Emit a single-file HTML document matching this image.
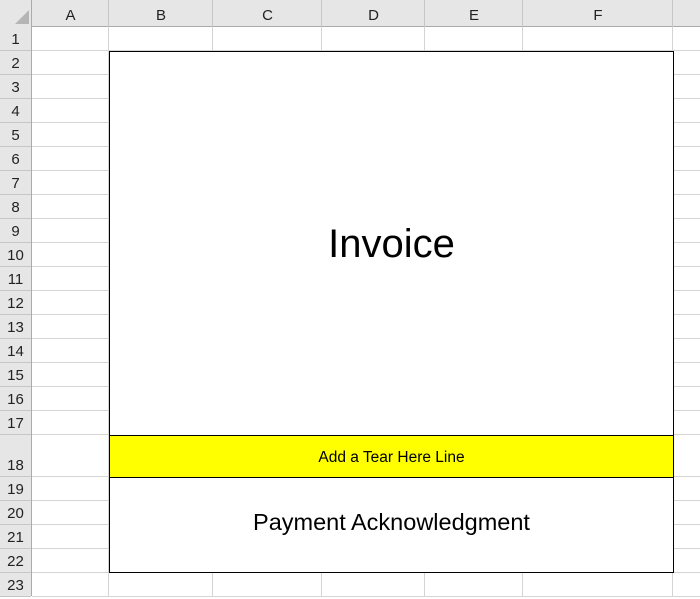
<!DOCTYPE html><html><head><style>
body{margin:0;width:700px;height:596px;overflow:hidden;background:#fff;font-family:"Liberation Sans",Calibri,sans-serif;position:relative}
.a{position:absolute}
.hl{position:absolute;height:1px;background:#d4d4d4}
.vl{position:absolute;width:1px;background:#d4d4d4}
.ch{position:absolute;top:0;height:27px;line-height:31px;text-align:center;font-size:15px;color:#222}
.rh{position:absolute;left:0;width:31px;text-align:center;font-size:15px;color:#222}
</style></head><body>
<div class="a" style="left:0;top:0;width:700px;height:27px;background:#e6e6e6;border-bottom:1px solid #ababab;box-sizing:border-box"></div>
<div class="a" style="left:0;top:0;width:32px;height:596px;background:#e6e6e6;border-right:1px solid #ababab;box-sizing:border-box"></div>
<svg class="a" style="left:14px;top:10px" width="16" height="15"><polygon points="15,0 15,14 1,14" fill="#b5b5b5"/></svg>
<div id="g"></div>
<div class="a" style="left:109px;top:51px;width:565px;height:522px;border:1px solid #000;box-sizing:border-box;background:#fff"></div>
<div class="a" style="left:109px;top:435px;width:565px;height:43px;border:1px solid #000;box-sizing:border-box;background:#ffff00;text-align:center;line-height:40px;font-size:15.5px;padding-top:2px">Add a Tear Here Line</div>
<div class="a" style="left:109px;top:222px;width:565px;text-align:center;font-size:40px">Invoice</div>
<div class="a" style="left:109px;top:509px;width:565px;text-align:center;font-size:23.5px">Payment Acknowledgment</div>
<script>
var cols=[[32,109,'A'],[109,213,'B'],[213,322,'C'],[322,425,'D'],[425,523,'E'],[523,673,'F'],[673,760,'']];
var h='';
cols.forEach(function(c){h+='<div class="ch" style="left:'+c[0]+'px;width:'+(c[1]-c[0])+'px">'+c[2]+'</div>';
h+='<div class="vl" style="left:'+(c[1]-1)+'px;top:0;height:27px;background:#c6c6c6"></div>';
h+='<div class="vl" style="left:'+(c[1]-1)+'px;top:27px;height:570px"></div>';});
var ys=[27];for(var i=1;i<=17;i++)ys.push(27+24*i);ys.push(477);for(var i=1;i<=5;i++)ys.push(477+24*i);
for(var r=0;r<ys.length-1;r++){var t=ys[r],b=ys[r+1];
h+='<div class="rh" style="top:'+t+'px;height:'+(b-t)+'px;line-height:'+((b-t)*2-22)+'px">'+(r+1)+'</div>';
h+='<div class="hl" style="left:0;width:31px;top:'+(b-1)+'px;background:#c6c6c6"></div>';
h+='<div class="hl" style="left:32px;width:668px;top:'+(b-1)+'px"></div>';}
document.getElementById('g').innerHTML=h;
</script>
</body></html>
